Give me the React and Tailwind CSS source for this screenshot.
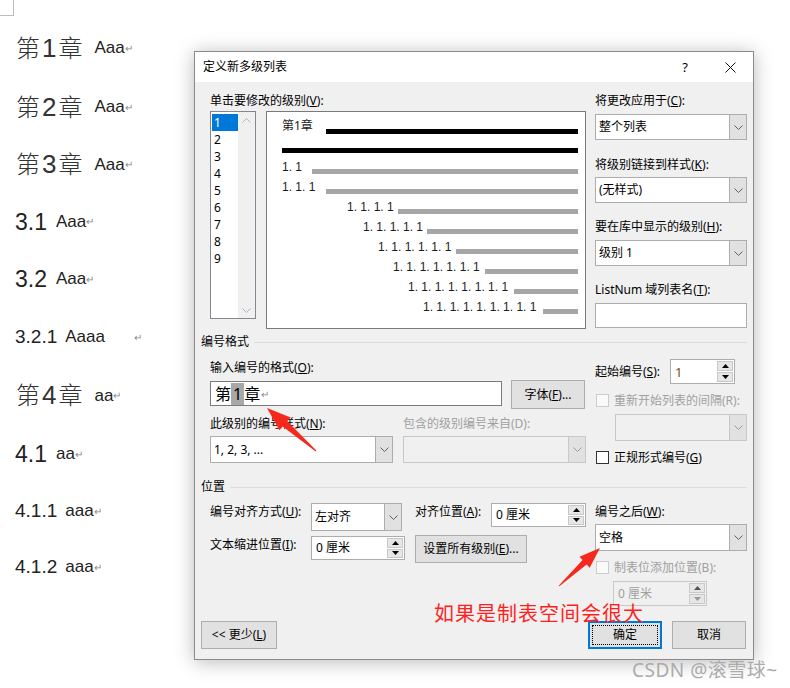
const UI = "font-['Noto_Sans','Noto_Sans_CJK_SC',sans-serif]";
const DOC = "font-['Liberation_Sans','Noto_Sans_CJK_SC',sans-serif]";

function Chevron({ down = true }) {
  return (
    <svg width="9" height="5" viewBox="0 0 9 5">
      <polyline
        points={down ? "0.5,0.5 4.5,4.5 8.5,0.5" : "0.5,4.5 4.5,0.5 8.5,4.5"}
        fill="none"
        stroke="currentColor"
        strokeWidth="1"
      />
    </svg>
  );
}

function Tri({ up }) {
  return (
    <svg width="7" height="4" viewBox="0 0 7 4">
      <polygon points={up ? "0,4 3.5,0 7,4" : "0,0 3.5,4 7,0"} fill="currentColor" />
    </svg>
  );
}

function Combo({ className, value, disabled }) {
  return (
    <div
      className={`flex border ${
        disabled ? "border-[#c8c8c8] bg-[#f0f0f0]" : "border-[#adadad] bg-white"
      } ${className}`}
    >
      <div className="flex-1 flex items-center pl-[3px]">{value}</div>
      <div
        className={`w-[17px] flex items-center justify-center border-l bg-[#e1e1e1] ${
          disabled ? "border-[#c8c8c8] text-[#9a9a9a]" : "border-[#adadad] text-[#606060]"
        }`}
      >
        <Chevron />
      </div>
    </div>
  );
}

function Spin({ className, value, disabled, valueClass = "" }) {
  return (
    <div
      className={`flex border ${
        disabled ? "border-[#c8c8c8] bg-[#f0f0f0] text-[#a0a0a0]" : "border-[#adadad] bg-white"
      } ${className}`}
    >
      <div className={`flex-1 flex items-center pl-[4px] ${valueClass}`}>{value}</div>
      <div className="w-[16px] m-[1px] flex flex-col gap-px">
        <div
          className={`flex-1 flex items-center justify-center bg-[#e6e6e6] border border-[#c8c8c8] ${
            disabled ? "text-[#555]" : "text-black"
          }`}
        >
          <Tri up />
        </div>
        <div
          className={`flex-1 flex items-center justify-center bg-[#e6e6e6] border border-[#c8c8c8] ${
            disabled ? "text-[#999]" : "text-black"
          }`}
        >
          <Tri />
        </div>
      </div>
    </div>
  );
}

function Button({ className, children }) {
  return (
    <div
      className={`flex items-center justify-center border border-[#adadad] bg-[#e1e1e1] ${className}`}
    >
      {children}
    </div>
  );
}

function Check({ disabled, label }) {
  return (
    <div className="flex items-center gap-[5px] h-[13px] pl-[1px]">
      <div
        className={`w-[13px] h-[13px] border ${
          disabled ? "border-[#cccccc] bg-[#fafafa]" : "border-[#333] bg-white"
        }`}
      />
      <span className={disabled ? "text-[#a0a0a0]" : ""}>{label}</span>
    </div>
  );
}

function U({ children }) {
  return <span className="underline">{children}</span>;
}

function Header({ children, className }) {
  return (
    <div className={`flex items-center h-[16px] gap-[5px] ${className}`}>
      <span>{children}</span>
      <div className="flex-1 h-px bg-[#dcdcdc]" />
    </div>
  );
}

const previewRows = [
  { t: "1. 1", pl: "pl-[15px]", w: "w-[30px]" },
  { t: "1. 1. 1", pl: "pl-[15px]", w: "w-[44px]" },
  { t: "1. 1. 1. 1", pl: "pl-[80px]", w: "w-[51px]" },
  { t: "1. 1. 1. 1. 1", pl: "pl-[96px]", w: "w-[64px]" },
  { t: "1. 1. 1. 1. 1. 1", pl: "pl-[111px]", w: "w-[78px]" },
  { t: "1. 1. 1. 1. 1. 1. 1", pl: "pl-[126px]", w: "w-[92px]" },
  { t: "1. 1. 1. 1. 1. 1. 1. 1", pl: "pl-[141px]", w: "w-[106px]" },
  { t: "1. 1. 1. 1. 1. 1. 1. 1. 1", pl: "pl-[156px]", w: "w-[120px]" },
];

const docLines = [
  { h: "h-[60px]", kind: "ch", n: "1", t: "Aaa" },
  { h: "h-[58px]", kind: "ch", n: "2", t: "Aaa" },
  { h: "h-[57px]", kind: "ch", n: "3", t: "Aaa" },
  { h: "h-[57px]", kind: "h2", n: "3.1", t: "Aaa" },
  { h: "h-[58px]", kind: "h2", n: "3.2", t: "Aaa" },
  { h: "h-[58px]", kind: "h3", n: "3.2.1", t: "Aaaa", gap: true },
  { h: "h-[59px]", kind: "ch", n: "4", t: "aa" },
  { h: "h-[58px]", kind: "h2", n: "4.1", t: "aa" },
  { h: "h-[56px]", kind: "h3", n: "4.1.1", t: "aaa" },
  { h: "h-[56px]", kind: "h3", n: "4.1.2", t: "aaa" },
];

function Ret({ className = "" }) {
  return <span className={`text-[10px] text-[#8a8a8a] ${className}`}>↵</span>;
}

function DocLine({ line }) {
  if (line.kind === "ch") {
    return (
      <div className={`${line.h} flex items-center pl-[16px]`}>
        <span className="text-[24px] leading-[30px] font-light text-[#333]">
          第<span className="font-normal text-[26px] px-[2px]">{line.n}</span>章
        </span>
        <span className="ml-[12px] text-[17px] text-[#222]">{line.t}</span>
        <Ret />
      </div>
    );
  }
  if (line.kind === "h2") {
    return (
      <div className={`${line.h} flex items-center pl-[15px]`}>
        <span className="text-[23px] leading-[30px] text-[#222]">{line.n}</span>
        <span className="ml-[9px] text-[17px] text-[#222]">{line.t}</span>
        <Ret />
      </div>
    );
  }
  return (
    <div className={`${line.h} flex items-center pl-[15px]`}>
      <span className="text-[19px] leading-[26px] text-[#222]">{line.n}</span>
      <span className="ml-[8px] text-[17px] text-[#222]">{line.t}</span>
      <Ret className={line.gap ? "ml-[29px]" : ""} />
    </div>
  );
}

function arrow(tx, ty, px, py, headLen, headW, shaftW, tailW) {
  const dx = px - tx;
  const dy = py - ty;
  const len = Math.hypot(dx, dy);
  const ux = dx / len;
  const uy = dy / len;
  const nx = -uy;
  const ny = ux;
  const bx = px - ux * headLen;
  const by = py - uy * headLen;
  const p = [
    [tx + (nx * tailW) / 2, ty + (ny * tailW) / 2],
    [bx + (nx * shaftW) / 2, by + (ny * shaftW) / 2],
    [bx + (nx * headW) / 2, by + (ny * headW) / 2],
    [px, py],
    [bx - (nx * headW) / 2, by - (ny * headW) / 2],
    [bx - (nx * shaftW) / 2, by - (ny * shaftW) / 2],
    [tx - (nx * tailW) / 2, ty - (ny * tailW) / 2],
  ];
  return p.map((q) => q.join(",")).join(" ");
}

export default function App() {
  return (
    <div className={`relative w-[790px] h-[688px] bg-white overflow-hidden flex ${UI}`}>
      {/* document behind the dialog */}
      <div className={`w-[194px] shrink-0 ${DOC}`}>
        <div className="w-[14px] h-[16px] border-r border-b border-[#bdbdbd]" />
        <div className="mt-[2px]">
          {docLines.map((l) => (
            <DocLine key={l.n} line={l} />
          ))}
        </div>
      </div>

      {/* dialog window */}
      <div className="mt-[51px] self-start w-[560px] shrink-0 border border-[#8a8a8a] bg-[#f0f0f0] text-[12px] leading-[16px] text-black shadow-[0_2px_18px_rgba(0,0,0,0.28)]">
        <div className="h-[30px] bg-white flex items-center pl-[8px]">
          <span>定义新多级列表</span>
          <div className="ml-auto flex items-center">
            <div className="w-[20px] text-center text-[13px]">?</div>
            <div className="ml-[12px] w-[46px] flex justify-center">
              <svg width="11" height="11" viewBox="0 0 11 11">
                <path d="M0.5 0.5 L10.5 10.5 M10.5 0.5 L0.5 10.5" stroke="#111" strokeWidth="1" />
              </svg>
            </div>
          </div>
        </div>

        <div className="px-[6px] pb-[10px]">
          {/* top: level list + preview, apply options */}
          <div className="flex pt-[11px] pl-[9px] gap-[9px]">
            <div className="w-[376px]">
              <div>
                单击要修改的级别(<U>V</U>):
              </div>
              <div className="mt-[2px] flex gap-[10px] items-start">
                <div className="w-[46px] h-[208px] border border-[#828790] bg-white flex">
                  <div className="w-[27px] pt-[2px] pl-[1px]">
                    {[1, 2, 3, 4, 5, 6, 7, 8, 9].map((n) => (
                      <div
                        key={n}
                        className={`h-[17px] pl-[2px] flex items-center ${
                          n === 1 ? "bg-[#0078d7] text-white" : ""
                        }`}
                      >
                        {n}
                      </div>
                    ))}
                  </div>
                  <div className="w-[17px] bg-[#f0f0f0] flex flex-col justify-between items-center pt-[6px] pb-[5px] text-[#b4b4b4]">
                    <Chevron down={false} />
                    <Chevron />
                  </div>
                </div>
                <div className="w-[320px] h-[218px] border border-[#7a7a7a] bg-white pt-[4px] pr-[7px] text-[#1c1c1c]">
                  <div className="h-[20px] flex items-center pl-[15px]">
                    <span className="w-[44px] shrink-0">第1章</span>
                    <div className="flex-1 h-[5px] bg-black mt-[11px]" />
                  </div>
                  <div className="mt-[12px] ml-[15px] h-[5px] bg-black" />
                  <div className="mt-[4px]">
                    {previewRows.map((r) => (
                      <div key={r.t} className={`h-[20px] flex items-center ${r.pl}`}>
                        <span className={`${r.w} shrink-0 whitespace-nowrap font-['Liberation_Sans',sans-serif]`}>
                          {r.t}
                        </span>
                        <div className="flex-1 h-[5px] bg-[#a6a6a6] mt-[9px]" />
                      </div>
                    ))}
                  </div>
                </div>
              </div>
            </div>

            <div className="w-[152px]">
              <div>
                将更改应用于(<U>C</U>):
              </div>
              <Combo className="mt-[5px] h-[26px]" value="整个列表" />
              <div className="mt-[17px]">
                将级别链接到样式(<U>K</U>):
              </div>
              <Combo className="mt-[4px] h-[26px]" value="(无样式)" />
              <div className="mt-[16px]">
                要在库中显示的级别(<U>H</U>):
              </div>
              <Combo className="mt-[5px] h-[26px]" value="级别 1" />
              <div className="mt-[16px]">
                ListNum 域列表名(<U>T</U>):
              </div>
              <div className="mt-[5px] h-[25px] border border-[#adadad] bg-white" />
            </div>
          </div>

          {/* numbering format */}
          <Header className="mt-[5px]">编号格式</Header>
          <div className="flex pl-[9px] gap-[9px]">
            <div className="w-[376px]">
              <div className="mt-[10px]">
                输入编号的格式(<U>O</U>):
              </div>
              <div className="mt-[4px] flex items-start gap-[9px] h-[29px]">
                <div className="mt-[1px] w-[292px] h-[25px] border border-[#7a7a7a] bg-white flex items-center pl-[4px] text-[16px] leading-[22px]">
                  <span>第</span>
                  <span className="bg-[#a8a8a8] px-[2px]">1</span>
                  <span>章</span>
                  <Ret className="ml-[1px]" />
                </div>
                <Button className="w-[74px] h-[29px]">
                  字体(<U>F</U>)...
                </Button>
              </div>
              <div className="mt-[7px] flex">
                <div className="w-[193px]">
                  此级别的编号样式(<U>N</U>):
                </div>
                <div className="text-[#a0a0a0]">包含的级别编号来自(D):</div>
              </div>
              <div className="mt-[4px] flex gap-[10px]">
                <Combo className="w-[183px] h-[27px]" value="1, 2, 3, ..." />
                <Combo className="w-[183px] h-[27px]" value="" disabled />
              </div>
            </div>

            <div className="w-[152px]">
              <div className="mt-[9px] h-[25px] flex items-center">
                <div className="w-[75px]">
                  起始编号(<U>S</U>):
                </div>
                <Spin className="w-[65px] h-[25px]" value="1" valueClass="text-[#7a4a1a] text-[13px]" />
              </div>
              <div className="mt-[10px]">
                <Check disabled label="重新开始列表的间隔(R):" />
              </div>
              <Combo className="mt-[7px] ml-[20px] w-[132px] h-[27px]" value="" disabled />
              <div className="mt-[10px]">
                <Check
                  label={
                    <>
                      正规形式编号(<U>G</U>)
                    </>
                  }
                />
              </div>
            </div>
          </div>

          {/* position */}
          <Header className="mt-[15px]">位置</Header>
          <div className="flex pl-[9px] gap-[9px]">
            <div className="w-[376px]">
              <div className="mt-[8px] flex items-start">
                <div className="w-[101px] mt-[1px]">
                  编号对齐方式(<U>U</U>):
                </div>
                <Combo className="w-[91px] h-[28px]" value="左对齐" />
                <div className="ml-[13px] w-[76px] mt-[1px]">
                  对齐位置(<U>A</U>):
                </div>
                <Spin className="w-[95px] h-[24px]" value="0 厘米" />
              </div>
              <div className="mt-[4px] flex items-start">
                <div className="w-[101px] mt-[2px]">
                  文本缩进位置(<U>I</U>):
                </div>
                <Spin className="mt-[1px] w-[94px] h-[24px]" value="0 厘米" />
                <Button className="ml-[10px] w-[112px] h-[28px]">
                  设置所有级别(<U>E</U>)...
                </Button>
              </div>
            </div>

            <div className="w-[152px]">
              <div className="mt-[9px]">
                编号之后(<U>W</U>):
              </div>
              <Combo className="mt-[4px] h-[27px]" value="空格" />
              <div className="mt-[10px]">
                <Check disabled label="制表位添加位置(B):" />
              </div>
              <Spin className="mt-[7px] ml-[18px] w-[94px] h-[25px]" value="0 厘米" disabled />
            </div>
          </div>

          {/* bottom buttons */}
          <div className="mt-[15px] flex h-[28px] pr-[1px]">
            <Button className="w-[76px] h-[28px]">
              &lt;&lt; 更少(<U>L</U>)
            </Button>
            <div className="ml-auto w-[74px] h-[28px] border-2 border-[#0078d7] bg-[#e1e1e1] p-[2px]">
              <div className="w-full h-full border border-dotted border-black flex items-center justify-center">
                确定
              </div>
            </div>
            <Button className="ml-[10px] w-[74px] h-[28px]">取消</Button>
          </div>
        </div>
      </div>

      {/* red annotation */}
      <svg className="absolute left-0 top-0 pointer-events-none" width="790" height="688">
        <polygon points={arrow(316, 451, 267, 408, 24, 17, 7, 1)} fill="#f5281e" />
        <polygon points={arrow(559, 586, 600, 548, 21, 15, 6, 1)} fill="#f5281e" />
      </svg>
      <div className="absolute left-[434px] top-[600px] text-[20px] leading-[28px] tracking-[1px] text-[#ff1f1f] whitespace-nowrap">
        如果是制表空间会很大
      </div>
      <div className="absolute left-[632px] top-[657px] text-[19px] leading-[26px] tracking-[0.5px] text-[#ababab] whitespace-nowrap">
        CSDN @滚雪球~
      </div>
    </div>
  );
}
